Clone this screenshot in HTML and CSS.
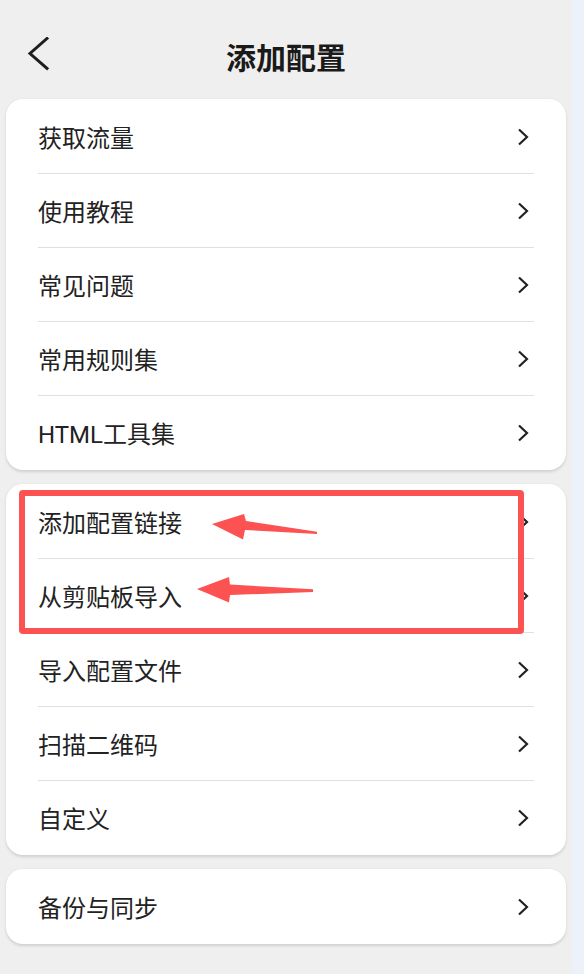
FILE: index.html
```html
<!DOCTYPE html>
<html lang="zh-CN">
<head>
<meta charset="utf-8">
<title>添加配置</title>
<link rel="stylesheet" href="styles.css">
</head>
<body>
<div class="screen">
  <div class="main">
    <header class="topbar">
      <button class="back" aria-label="返回">
        <svg width="24" height="36" viewBox="0 0 24 36"><polyline points="21,1.5 4,16.5 21,31.5" fill="none" stroke="#1e1e1e" stroke-width="3" stroke-linecap="square"/></svg>
      </button>
      <h1 class="title">添加配置</h1>
      <span></span>
    </header>

    <section class="card">
      <div class="row"><span class="label">获取流量</span><svg class="chev" width="14" height="20" viewBox="0 0 14 20"><polyline points="3,2.5 11,10 3,17.5" fill="none" stroke="#222" stroke-width="2.2"/></svg></div>
      <div class="divider"></div>
      <div class="row"><span class="label">使用教程</span><svg class="chev" width="14" height="20" viewBox="0 0 14 20"><polyline points="3,2.5 11,10 3,17.5" fill="none" stroke="#222" stroke-width="2.2"/></svg></div>
      <div class="divider"></div>
      <div class="row"><span class="label">常见问题</span><svg class="chev" width="14" height="20" viewBox="0 0 14 20"><polyline points="3,2.5 11,10 3,17.5" fill="none" stroke="#222" stroke-width="2.2"/></svg></div>
      <div class="divider"></div>
      <div class="row"><span class="label">常用规则集</span><svg class="chev" width="14" height="20" viewBox="0 0 14 20"><polyline points="3,2.5 11,10 3,17.5" fill="none" stroke="#222" stroke-width="2.2"/></svg></div>
      <div class="divider"></div>
      <div class="row"><span class="label">HTML工具集</span><svg class="chev" width="14" height="20" viewBox="0 0 14 20"><polyline points="3,2.5 11,10 3,17.5" fill="none" stroke="#222" stroke-width="2.2"/></svg></div>
    </section>

    <section class="card">
      <div class="row"><span class="label">添加配置链接</span><svg class="chev" width="14" height="20" viewBox="0 0 14 20"><polyline points="3,2.5 11,10 3,17.5" fill="none" stroke="#222" stroke-width="2.2"/></svg></div>
      <div class="divider"></div>
      <div class="row"><span class="label">从剪贴板导入</span><svg class="chev" width="14" height="20" viewBox="0 0 14 20"><polyline points="3,2.5 11,10 3,17.5" fill="none" stroke="#222" stroke-width="2.2"/></svg></div>
      <div class="divider"></div>
      <div class="row"><span class="label">导入配置文件</span><svg class="chev" width="14" height="20" viewBox="0 0 14 20"><polyline points="3,2.5 11,10 3,17.5" fill="none" stroke="#222" stroke-width="2.2"/></svg></div>
      <div class="divider"></div>
      <div class="row"><span class="label">扫描二维码</span><svg class="chev" width="14" height="20" viewBox="0 0 14 20"><polyline points="3,2.5 11,10 3,17.5" fill="none" stroke="#222" stroke-width="2.2"/></svg></div>
      <div class="divider"></div>
      <div class="row"><span class="label">自定义</span><svg class="chev" width="14" height="20" viewBox="0 0 14 20"><polyline points="3,2.5 11,10 3,17.5" fill="none" stroke="#222" stroke-width="2.2"/></svg></div>
    </section>

    <section class="card">
      <div class="row"><span class="label">备份与同步</span><svg class="chev" width="14" height="20" viewBox="0 0 14 20"><polyline points="3,2.5 11,10 3,17.5" fill="none" stroke="#222" stroke-width="2.2"/></svg></div>
    </section>
  </div>
  <div class="strip"></div>

  <div class="annot-box"></div>
  <svg class="annot-arrows" width="584" height="974" viewBox="0 0 584 974">
    <polygon points="212,524 244,514 246,521 317,531.8 317,534 245,530 243,539.5" fill="#fd5252"/>
    <polygon points="197,589 229,577 230,584.5 313,589.3 313,592 230,595 229,602.5" fill="#fd5252"/>
  </svg>
</div>
</body>
</html>
```

FILE: styles.css
```css
* { box-sizing: border-box; }

html, body {
  margin: 0;
  padding: 0;
}

body {
  background: #efefef;
  font-family: Roboto, "Noto Sans CJK SC", sans-serif;
  color: #222;
}

.screen {
  position: relative;
  width: 584px;
  height: 974px;
  display: grid;
  grid-template-columns: 572px 12px;
  overflow: hidden;
}

.main {
  display: flex;
  flex-direction: column;
  gap: 14px;
  padding-bottom: 20px;
}

.strip {
  background: #edf1f9;
}

.topbar {
  display: grid;
  grid-template-columns: 60px 1fr 60px;
  align-items: center;
  height: 99px;
  padding-top: 10px;
  margin-bottom: -14px;
}

.back {
  border: 0;
  background: none;
  padding: 0;
  margin-left: 26px;
  width: 24px;
  height: 36px;
  display: block;
}

.back svg { display: block; }

.title {
  margin: 0;
  text-align: center;
  font-family: "Noto Sans CJK SC", sans-serif;
  font-size: 30px;
  font-weight: 700;
  color: #1a1a1a;
  line-height: 1;
  padding-top: 2px;
}

.card {
  margin-left: 6px;
  width: 560px;
  background: #fff;
  border-radius: 17px;
  box-shadow: 0 1.5px 3px rgba(0, 0, 0, 0.13);
  padding: 1px 0;
}

.row {
  height: 73px;
  display: flex;
  align-items: center;
  justify-content: space-between;
  padding: 0 36px 0 32px;
}

.label {
  font-size: 24px;
  line-height: 1;
  color: #222;
  padding-top: 4px;
}

.chev { display: block; }

.divider {
  height: 1px;
  margin: 0 32px;
  background: #e0e0e0;
}

.annot-box {
  position: absolute;
  left: 19px;
  top: 490px;
  width: 505px;
  height: 144px;
  border: 6px solid #fd5252;
  border-radius: 4px;
}

.annot-arrows {
  position: absolute;
  left: 0;
  top: 0;
  pointer-events: none;
}
```
